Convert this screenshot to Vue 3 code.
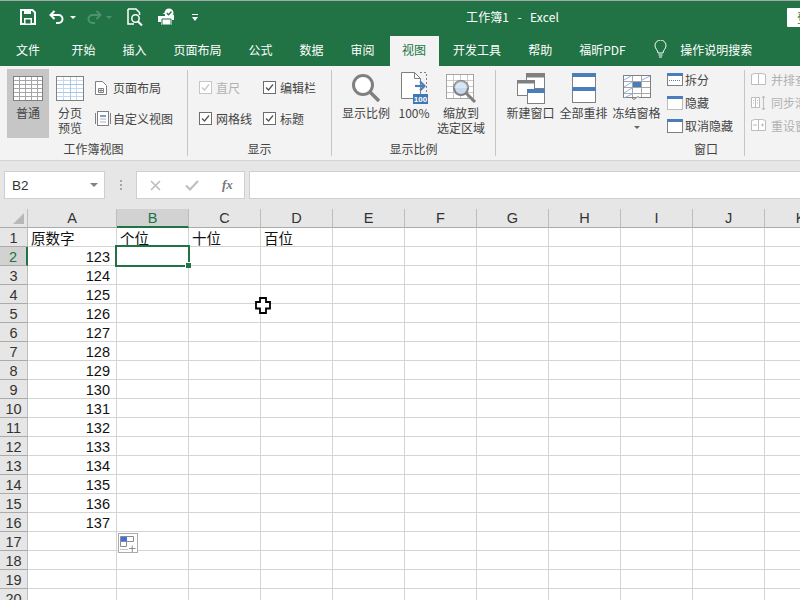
<script setup>
const tabs = ['开始', '插入', '页面布局', '公式', '数据', '审阅', '视图', '开发工具', '帮助', '福昕PDF']
const cols = ['A', 'B', 'C', 'D', 'E', 'F', 'G', 'H', 'I', 'J', 'K']
const heads = { 1: ['原数字', '个位', '十位', '百位'] }
const rows = Array.from({ length: 20 }, (_, i) => i + 1)
function cellText(r, c) {
  if (r === 1) return heads[1][c] || ''
  if (c === 0 && r <= 16) return String(121 + r)
  return ''
}
</script>

<template>
  <div class="app">
    <header class="titlebar">
      <div class="qat">
        <svg class="qi" width="16" height="16" viewBox="0 0 16 16"><path d="M1 1h11.500L15 3.500V15H1z" fill="none" stroke="#fff" stroke-width="2"/><path d="M4 1h7v4H4z M4 9h8v6H4z" fill="#fff"/><path d="M5.500 10.500h5v4h-5z" fill="#217346"/></svg>
        <svg class="qi undo" width="17" height="14" viewBox="0 0 17 14"><path d="M5.500 1 1.500 5l4 4" fill="none" stroke="#fff" stroke-width="2"/><path d="M2 5h7.500a4 4 0 0 1 0 8H7" fill="none" stroke="#fff" stroke-width="2"/></svg>
        <span class="caret"></span>
        <svg class="qi redo" width="17" height="14" viewBox="0 0 17 14"><path d="M11.500 1l4 4-4 4" fill="none" stroke="#4f9070" stroke-width="2"/><path d="M15 5H7.500a4 4 0 0 0 0 8H10" fill="none" stroke="#4f9070" stroke-width="2"/></svg>
        <span class="caret dim"></span>
        <svg class="qi prev" width="17" height="18" viewBox="0 0 17 18"><path d="M1 1h8l3.500 3.500V7M1 1v15h6" fill="none" stroke="#fff" stroke-width="1.500"/><circle cx="8.500" cy="10.500" r="3.700" fill="none" stroke="#fff" stroke-width="1.500"/><path d="M11 13.500l4 4" stroke="#fff" stroke-width="2"/></svg>
        <svg class="qi check" width="19" height="18" viewBox="0 0 19 18"><path d="M5 5h3v3H1v6h3v3h11v-5h2V7h-3" fill="#fff"/><path d="M5 11h9v6H5z" fill="#fff" stroke="#217346"/><circle cx="12" cy="5" r="4.500" fill="#fff"/><path d="M9.800 5l1.700 1.700 3-3.200" fill="none" stroke="#217346" stroke-width="1.300"/></svg>
        <svg class="qi more" width="6" height="7" viewBox="0 0 6 7"><path d="M0 0h6v1H0z M0 3h6L3 7z" fill="#fff"/></svg>
      </div>
      <div class="doc">工作簿1&nbsp;&nbsp; -&nbsp;&nbsp; Excel</div>
      <div class="login">登录</div>
    </header>

    <nav class="tabs">
      <span class="tab file">文件</span>
      <span v-for="t in tabs" :key="t" class="tab" :class="{ active: t === '视图' }">{{ t }}</span>
      <span class="search">
        <svg width="13" height="19" viewBox="0 0 13 19"><path d="M4 13c0-3-3-4-3-7.500a5.500 5.500 0 0 1 11 0C12 9 9 10 9 13z" fill="none" stroke="#fff"/><path d="M4.500 15h4M5 17h3" stroke="#fff"/></svg>
        <span>操作说明搜索</span>
      </span>
    </nav>

    <section class="ribbon">
      <div class="group g1">
        <div class="body">
          <div class="big sel w42">
            <div class="ico">
              <svg width="30" height="25" viewBox="0 0 30 25"><rect x=".5" y=".5" width="29" height="24" fill="#fff" stroke="#808080"/><path d="M1 4.500h28M1 8.500h28M1 12.500h28M1 16.500h28M1 20.500h28M6.500 1v23M12.500 1v23M18.500 1v23M24.500 1v23" stroke="#a6a6a6"/></svg>
            </div>
            <span>普通</span>
          </div>
          <div class="big w42">
            <div class="ico">
              <svg width="28" height="25" viewBox="0 0 28 25"><rect x=".5" y=".5" width="27" height="24" fill="#fff" stroke="#808080"/><path d="M1 4.500h26M1 12.500h26M1 20.500h26M7.500 1v23M20.500 1v23" stroke="#c5d9f1"/><path d="M1 8.500h26M1 16.500h26M14.500 1v23" stroke="#a9c6e8"/></svg>
            </div>
            <span>分页<br>预览</span>
          </div>
          <div class="smalls tall first">
            <div class="row">
              <span class="si"><svg width="12" height="14" viewBox="0 0 12 14"><path d="M.5.500h7l4 4v9H.500z" fill="#fff" stroke="#808080"/><path d="M3.500 7.500h5v4h-5zM6 7.500v4M3.500 9.500h5" fill="none" stroke="#808080"/></svg></span>
              <span>页面布局</span>
            </div>
            <div class="row">
              <span class="si"><svg width="16" height="17" viewBox="0 0 16 17"><path d="M.5 3v11M15.500 3v11" stroke="#808080"/><rect x="2.500" y="1.500" width="11" height="14" fill="#fff" stroke="#808080"/><path d="M5 6h6" stroke="#4a7ebb" stroke-width="1.500"/><path d="M5 9h6M5 12h6" stroke="#b0b0b0"/></svg></span>
              <span>自定义视图</span>
            </div>
          </div>
        </div>
        <div class="label">工作簿视图</div>
      </div>

      <div class="group g2">
        <div class="body checks">
          <label class="chk off"><span class="box"><svg width="11" height="11" viewBox="0 0 11 11"><path d="M2 5.500 4.500 8 9 2.500" fill="none" stroke="#c6c6c6" stroke-width="1.300"/></svg></span>直尺</label>
          <label class="chk"><span class="box"><svg width="11" height="11" viewBox="0 0 11 11"><path d="M2 5.500 4.500 8 9 2.500" fill="none" stroke="#555" stroke-width="1.300"/></svg></span>编辑栏</label>
          <label class="chk"><span class="box"><svg width="11" height="11" viewBox="0 0 11 11"><path d="M2 5.500 4.500 8 9 2.500" fill="none" stroke="#555" stroke-width="1.300"/></svg></span>网格线</label>
          <label class="chk"><span class="box"><svg width="11" height="11" viewBox="0 0 11 11"><path d="M2 5.500 4.500 8 9 2.500" fill="none" stroke="#555" stroke-width="1.300"/></svg></span>标题</label>
        </div>
        <div class="label">显示</div>
      </div>

      <div class="group g3">
        <div class="body">
          <div class="big w52">
            <div class="ico">
              <svg width="28" height="28" viewBox="0 0 28 28"><circle cx="11" cy="11" r="9.500" fill="#fff" stroke="#7f7f7f" stroke-width="3"/><path d="M18 18l9 9" stroke="#7f7f7f" stroke-width="3.500"/></svg>
            </div>
            <span>显示比例</span>
          </div>
          <div class="big w44">
            <div class="ico">
              <svg width="27" height="32" viewBox="0 0 27 32"><path d="M.5.500h13l6 6v20H.5z" fill="#fff" stroke="#808080"/><path d="M13.500.500v6h6" fill="none" stroke="#808080"/><path d="M19 .5h6.500V22" fill="none" stroke="#808080" stroke-dasharray="2 2"/><path d="M14 14h9" stroke="#4a7ebb" stroke-width="2.200"/><path d="M19 9.500l4.500 4.500-4.500 4.500" fill="none" stroke="#4a7ebb" stroke-width="2.200"/><rect x="12" y="22" width="15" height="10" fill="#3f78b5"/><text x="19.500" y="30" font-size="8" font-weight="700" text-anchor="middle" fill="#fff" font-family="Liberation Sans">100</text></svg>
            </div>
            <span>100%</span>
          </div>
          <div class="big w50">
            <div class="ico">
              <svg width="31" height="29" viewBox="0 0 31 29"><rect x=".5" y=".5" width="27" height="24" fill="#fff" stroke="#a6a6a6"/><path d="M1 6.500h26M1 12.500h26M1 18.500h26M7.500 1v23M14.500 1v23M21.500 1v23" stroke="#c8c8c8"/><circle cx="15" cy="14" r="7" fill="#c5d9f1" stroke="#7f7f7f" stroke-width="2"/><path d="M7.800 14a7 7 0 0 1 14.400 0z" fill="#fff" opacity=".35"/><path d="M20 19l9 9" stroke="#7f7f7f" stroke-width="3"/></svg>
            </div>
            <span>缩放到<br>选定区域</span>
          </div>
        </div>
        <div class="label">显示比例</div>
      </div>

      <div class="group g4">
        <div class="body">
          <div class="big w53">
            <div class="ico">
              <svg width="28" height="31" viewBox="0 0 28 31"><rect x="9.500" y=".5" width="18" height="15" fill="#fff" stroke="#808080"/><path d="M9 1h19v3.500H9z" fill="#808080"/><rect x=".5" y="7.500" width="17" height="15" fill="#fff" stroke="#808080"/><path d="M0 7h18v3.500H0z" fill="#808080"/><rect x="10.500" y="16.500" width="17" height="14" fill="#fff" stroke="#808080"/><path d="M10 16h18v4H10z" fill="#4a7ebb"/></svg>
            </div>
            <span>新建窗口</span>
          </div>
          <div class="big w53">
            <div class="ico">
              <svg width="24" height="30" viewBox="0 0 24 30"><rect x=".5" y=".5" width="23" height="29" fill="#fff" stroke="#808080"/><path d="M0 0h24v4H0zM0 14h24v4H0z" fill="#4a7ebb"/></svg>
            </div>
            <span>全部重排</span>
          </div>
          <div class="big w53 freeze">
            <div class="ico">
              <svg width="28" height="26" viewBox="0 0 28 26"><rect x=".5" y=".5" width="27" height="22" fill="#fff" stroke="#808080"/><path d="M1 6.500h26M1 12.500h26M1 18.500h26M9.500 1v21M18.500 1v21" stroke="#a6a6a6"/><path d="M10 7h8v5h-8z" fill="#4a7ebb"/><path d="M1 5l7-4M1 12l8-5M1 18l8-5M1 23l8-4M19 5l8-4" stroke="#8db4e2"/><path d="M9 23q2 3 4 0t4 0" fill="#f3f3f3" stroke="#808080"/></svg>
            </div>
            <span>冻结窗格</span>
            <i class="drop"></i>
          </div>
          <div class="smalls short">
            <div class="row">
              <span class="si2"><svg width="16" height="13" viewBox="0 0 16 13"><rect x=".5" y=".5" width="15" height="12" fill="#fff" stroke="#808080"/><path d="M0 0h16v3H0z" fill="#4a7ebb"/><path d="M2 7.500h12" stroke="#4a7ebb" stroke-dasharray="1 1"/></svg></span>
              <span>拆分</span>
            </div>
            <div class="row">
              <span class="si2"><svg width="16" height="14" viewBox="0 0 16 14"><rect x=".5" y=".5" width="15" height="13" fill="#fff" stroke="#808080" stroke-dasharray="1 1"/><path d="M0 0h16v3H0z" fill="#4a7ebb"/></svg></span>
              <span>隐藏</span>
            </div>
            <div class="row">
              <span class="si2"><svg width="16" height="14" viewBox="0 0 16 14"><rect x=".5" y=".5" width="15" height="13" fill="#fff" stroke="#808080"/><path d="M0 0h16v3H0z" fill="#4a7ebb"/></svg></span>
              <span>取消隐藏</span>
            </div>
          </div>
        </div>
        <div class="label win">窗口</div>
      </div>

      <div class="group g5">
        <div class="smalls short disabled">
          <div class="row">
            <span class="si3"><svg width="15" height="13" viewBox="0 0 15 13"><path d="M.5 1.500 4 .5h3.500v11H.5zM7.500.5H11l3.500 1v10h-7z" fill="#fff" stroke="#bdbdbd"/></svg></span>
            <span>并排查看</span>
          </div>
          <div class="row">
            <span class="si3"><svg width="15" height="16" viewBox="0 0 15 16"><path d="M.5 2.500h8v10h-8zM4.500 2.500v10M2 5.500h1M2 8h1M6 5.500h1M6 8h1" fill="#fff" stroke="#bdbdbd"/><path d="M12.500 1v14M11 3l1.500-2L14 3M11 13l1.500 2 1.500-2" fill="none" stroke="#bdbdbd"/></svg></span>
            <span>同步滚动</span>
          </div>
          <div class="row">
            <span class="si3"><svg width="15" height="13" viewBox="0 0 15 13"><path d="M.5 1.500 4 .5h3.500v11H.5zM7.500.5H11l3.500 1v10h-7z" fill="#fff" stroke="#bdbdbd"/><path d="M2 6h4M10 6h3M11.500 4.500v3" stroke="#bdbdbd"/></svg></span>
            <span>重设窗口位置</span>
          </div>
        </div>
      </div>
    </section>

    <section class="fbar">
      <div class="name"><span>B2</span><i class="ncaret"></i></div>
      <div class="dots"><i></i><i></i><i></i></div>
      <div class="fx">
        <svg width="11" height="11" viewBox="0 0 11 11"><path d="M1 1l9 9M10 1l-9 9" stroke="#bdbdbd" stroke-width="1.600"/></svg>
        <svg width="14" height="11" viewBox="0 0 14 11"><path d="M1 5.500l4 4 8-8.500" fill="none" stroke="#bdbdbd" stroke-width="2"/></svg>
        <em>fx</em>
      </div>
      <div class="input"></div>
    </section>

    <section class="sheet">
      <div class="grid">
        <div class="ch corner"><i></i></div>
        <div v-for="(c, i) in cols" :key="c" class="ch" :class="{ on: i === 1 }">{{ c }}</div>
        <template v-for="r in rows" :key="r">
          <div class="rh" :class="{ on: r === 2 }">{{ r }}</div>
          <div v-for="(c, i) in cols" :key="c" class="cell" :class="{ num: r > 1 && i === 0 }">{{ cellText(r, i) }}</div>
        </template>
      </div>
      <div class="selection"><i></i></div>
      <div class="paste">
        <svg width="16" height="17" viewBox="0 0 16 17"><path d="M.5 1.500h13v5H.5zM.5 6.500h6v5H.5z" fill="#fff" stroke="#8c8c8c"/><path d="M1 2h6v4H1z" fill="#3f6fe0"/><path d="M.5 14.500h7" stroke="#8c8c8c" stroke-dasharray="1 1"/><path d="M9 13.500h6.500M12.250 10.500v6.500" stroke="#8c8c8c"/></svg>
      </div>
      <svg class="cursor" width="16" height="17" viewBox="0 0 16 17"><path d="M5 1h6v4h4v6.500h-4v4.500H5v-4.500H1V5h4z" fill="#fff" stroke="#000" stroke-width="1.800"/></svg>
    </section>
  </div>
</template>

<style scoped>
.app {
  width: 800px;
  height: 600px;
  overflow: hidden;
  display: flex;
  flex-direction: column;
  background: #e6e6e6;
  font-family: "Noto Sans CJK SC", "Liberation Sans", sans-serif;
  font-size: 12px;
  color: #444;
}
.titlebar {
  flex: none;
  height: 32px;
  margin-top: 1px;
  background: #217346;
  display: flex;
  align-items: center;
  color: #fff;
  box-shadow: 0 -1px 0 #a8a8a8;
}
.qat {
  width: 240px;
  flex: none;
  display: flex;
  align-items: center;
  padding-left: 20px;
  box-sizing: border-box;
}
.qi { flex: none; display: block; }
.undo { margin-left: 13px; }
.caret {
  width: 0;
  height: 0;
  margin-left: 4px;
  border: 3px solid transparent;
  border-top: 3px solid #fff;
  border-bottom: 0;
}
.caret.dim { border-top-color: #4f9070; }
.redo { margin-left: 9px; }
.prev { margin-left: 15px; }
.check { margin-left: 13px; }
.more { margin-left: 16px; }
.doc {
  flex: 1;
  text-align: center;
  padding: 0 32px 2px 0;
  font-size: 12px;
  letter-spacing: .1px;
  margin-left: 30px;
}
.login {
  width: 13px;
  height: 19px;
  overflow: hidden;
  background: #fff;
  border-radius: 1px 0 0 1px;
  color: #217346;
  line-height: 19px;
  white-space: nowrap;
  text-indent: 10px;
}
.tabs {
  flex: none;
  height: 33px;
  background: #217346;
  display: flex;
  align-items: flex-end;
  color: #fff;
}
.tab {
  height: 30px;
  line-height: 27px;
  padding: 0 13.500px;
  white-space: nowrap;
}
.file { width: 24px; padding: 0 18px 0 16px; }
.tab.active {
  background: #f3f3f3;
  color: #217346;
  padding: 0 12.500px 0 12px;
  margin: 0 1px 0 2px;
}
.search {
  height: 30px;
  display: flex;
  align-items: center;
  gap: 13px;
  margin-left: 15px;
  padding-bottom: 3px;
  box-sizing: border-box;
}
.ribbon {
  flex: none;
  height: 95px;
  box-sizing: border-box;
  padding-top: 4px;
  background: #f3f3f3;
  border-bottom: 1px solid #d4d4d4;
  display: flex;
  align-items: flex-start;
}
.group {
  flex: none;
  height: 86px;
  box-sizing: border-box;
  border-right: 1px solid #c6c6c6;
  display: flex;
  flex-direction: column;
}
.g1 { width: 188px; }
.g2 { width: 144px; }
.g3 { width: 164px; }
.g4 { width: 249px; }
.g5 { border: 0; padding-left: 6px; white-space: nowrap; }
.body {
  height: 72px;
  display: flex;
  align-items: flex-start;
  padding-left: 7px;
}
.g3 .body { padding-left: 8px; }
.g4 .body { padding-left: 8px; }
.label {
  height: 14px;
  line-height: 14px;
  text-align: center;
}
.label.win { padding-left: 172px; }
.big {
  flex: none;
  height: 69px;
  margin-top: -1px;
  display: flex;
  flex-direction: column;
  align-items: center;
  text-align: center;
  line-height: 15px;
  white-space: nowrap;
}
.big .ico {
  height: 32px;
  margin: 3px 0 1px;
  display: flex;
  align-items: center;
  justify-content: center;
}
.big svg { display: block; }
.w42 { width: 42px; }
.w44 { width: 44px; }
.w50 { width: 50px; }
.w52 { width: 52px; }
.w53 { width: 53px; }
.sel { background: #c6c6c6; }
.drop {
  width: 0;
  height: 0;
  margin-top: 6px;
  border: 3px solid transparent;
  border-top: 3px solid #666;
  border-bottom: 0;
}
.smalls { display: flex; flex-direction: column; white-space: nowrap; }
.tall { padding-top: 2px; }
.first { margin-left: 4px; }
.tall .row { height: 31px; display: flex; align-items: center; }
.short .row { height: 23px; display: flex; align-items: center; }
.short { margin-top: -2px; margin-left: 4px; }
.si { width: 18px; flex: none; display: flex; }
.si svg { display: block; }
.si2 { width: 19px; flex: none; display: flex; margin-right: -1px; }
.si3 { width: 20px; flex: none; display: flex; }
.disabled { color: #b1b1b1; margin-left: 0; }
.checks {
  display: grid;
  grid-template-columns: 64px 1fr;
  grid-auto-rows: 31px;
  padding: 2px 0 0 11px;
  align-items: center;
}
.chk { display: flex; align-items: center; gap: 4px; }
.chk.off { color: #b1b1b1; }
.box {
  width: 13px;
  height: 13px;
  box-sizing: border-box;
  border: 1px solid #6d6d6d;
  background: #fff;
  display: flex;
}
.off .box { border-color: #c6c6c6; }
.fbar {
  flex: none;
  height: 48px;
  box-sizing: border-box;
  padding: 10px 0 10px 4px;
  background: #e6e6e6;
  display: flex;
  align-items: stretch;
}
.name {
  width: 101px;
  box-sizing: border-box;
  border: 1px solid #cfcfcf;
  background: #fff;
  display: flex;
  align-items: center;
  justify-content: space-between;
  padding: 0 6px 0 7px;
  font: 13.500px "Liberation Sans", sans-serif;
  color: #333;
}
.ncaret {
  width: 0;
  height: 0;
  border: 4px solid transparent;
  border-top: 4px solid #808080;
  border-bottom: 0;
}
.dots {
  width: 31px;
  display: flex;
  flex-direction: column;
  align-items: center;
  justify-content: center;
  gap: 2px;
}
.dots i { width: 2px; height: 2px; background: #a6a6a6; display: block; }
.fx {
  width: 109px;
  box-sizing: border-box;
  border: 1px solid #cfcfcf;
  background: #fff;
  display: flex;
  align-items: center;
  padding-left: 13px;
}
.fx svg:nth-child(2) { margin-left: 24px; }
.fx em {
  margin-left: 23px;
  font: italic 700 13px "Liberation Serif", serif;
  color: #777;
}
.input {
  flex: 1;
  margin-left: 4px;
  border: 1px solid #cfcfcf;
  border-right: 0;
  background: #fff;
}
.sheet {
  flex: 1;
  position: relative;
  background: #fff;
  overflow: hidden;
}
.grid {
  display: grid;
  grid-template-columns: 28px 89px repeat(10, 72px);
  grid-auto-rows: 19px;
  font-family: "Liberation Sans", "Noto Sans CJK SC", sans-serif;
  font-size: 14.500px;
  color: #111;
}
.ch, .rh {
  background: #e6e6e6;
  color: #333;
  text-align: center;
  line-height: 19px;
  box-sizing: border-box;
  border-right: 1px solid #bdbdbd;
  border-bottom: 1px solid #ababab;
}
.rh { line-height: 21px; }
.ch.on, .rh.on { background: #d2d2d2; color: #217346; }
.ch.on { border-bottom: 2px solid #217346; }
.rh.on { border-right: 2px solid #217346; }
.corner { position: relative; }
.corner i {
  position: absolute;
  left: 13px;
  top: 4px;
  width: 0;
  height: 0;
  border-left: 11px solid transparent;
  border-bottom: 11px solid #b8b8b8;
}
.cell {
  box-sizing: border-box;
  border-right: 1px solid #d4d4d4;
  border-bottom: 1px solid #d4d4d4;
  padding: 0 0 0 3px;
  line-height: 22px;
  white-space: nowrap;
  overflow: hidden;
}
.cell.num { text-align: right; padding-right: 6px; line-height: 21px; }
.selection {
  position: absolute;
  left: 115px;
  top: 36px;
  width: 75px;
  height: 22px;
  box-sizing: border-box;
  border: 2px solid #217346;
}
.selection i {
  position: absolute;
  right: -3px;
  bottom: -3px;
  width: 5px;
  height: 5px;
  background: #217346;
  border: 1px solid #fff;
  border-right: 0;
  border-bottom: 0;
}
.paste {
  position: absolute;
  left: 118px;
  top: 324px;
  width: 20px;
  height: 20px;
  box-sizing: border-box;
  border: 1px solid #ababab;
  background: #fff;
  display: flex;
  align-items: center;
  justify-content: center;
}
.cursor { position: absolute; left: 255px; top: 88px; }
</style>
